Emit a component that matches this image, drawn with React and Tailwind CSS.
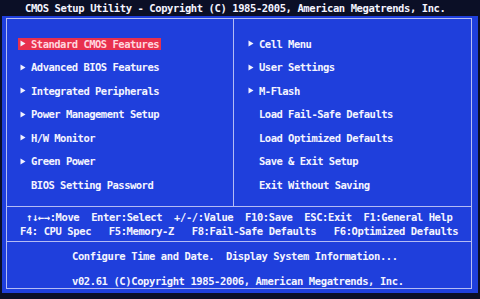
import React from 'react';

const leftItems = [
    { label: 'Standard CMOS Features', arrow: true, active: true },
    { label: 'Advanced BIOS Features', arrow: true },
    { label: 'Integrated Peripherals', arrow: true },
    { label: 'Power Management Setup', arrow: true },
    { label: 'H/W Monitor', arrow: true },
    { label: 'Green Power', arrow: true },
    { label: 'BIOS Setting Password', arrow: false },
];

const rightItems = [
    { label: 'Cell Menu', arrow: true },
    { label: 'User Settings', arrow: true },
    { label: 'M-Flash', arrow: true },
    { label: 'Load Fail-Safe Defaults', arrow: false },
    { label: 'Load Optimized Defaults', arrow: false },
    { label: 'Save & Exit Setup', arrow: false },
    { label: 'Exit Without Saving', arrow: false },
];

function Arrow() {
    return (
        <svg width="6" height="7" viewBox="0 0 6 7" className="shrink-0">
            <path d="M0.5 0.5 L5.5 3.5 L0.5 6.5 Z" fill="#f2f2ff" />
        </svg>
    );
}

function MenuItem({ item }) {
    return (
        <div className="h-[23.5px] flex items-center">
            <div
                className={
                    'flex items-center h-[12px] pl-[2px] pr-[2px] ' +
                    (item.active ? 'bg-[#e8304e] text-[#ffd6de]' : 'text-[#f4f4ff]')
                }
            >
                <div className="w-[11px] flex items-center">{item.arrow && <Arrow />}</div>
                <span className="whitespace-pre">{item.label}</span>
            </div>
        </div>
    );
}

export default function App() {
    return (
        <div
            className="w-[480px] h-[299px] bg-[#0b0f26] flex flex-col overflow-hidden text-[10.5px] tracking-[-0.5px] font-bold leading-none"
            style={{ fontFamily: '"DejaVu Sans Mono", "Liberation Mono", monospace' }}
        >
            <header className="h-[16px] shrink-0 flex items-center pl-[25px] tracking-[-0.4px] text-[#f4f4ff] whitespace-pre">
                CMOS Setup Utility - Copyright (C) 1985-2005, American Megatrends, Inc.
            </header>

            <main className="h-[277px] mx-[2px] bg-[#1f3fdc] pl-[4px] pr-[6px] pt-[2px] pb-[4px]">
                <div className="h-full border border-[#b4bcf4] flex flex-col">
                    <section className="h-[188px] flex border-b border-[#b4bcf4]">
                        <div className="w-[227px] border-r border-[#b4bcf4] pl-[11px] pt-[13px]">
                            {leftItems.map((it) => (
                                <MenuItem key={it.label} item={it} />
                            ))}
                        </div>
                        <div className="flex-1 pl-[12px] pt-[13px]">
                            {rightItems.map((it) => (
                                <MenuItem key={it.label} item={it} />
                            ))}
                        </div>
                    </section>

                    <section className="h-[35px] flex flex-col justify-center gap-[3px] border-b border-[#b4bcf4] tracking-[-0.4px] text-[#f4f4ff]">
                        <p className="pl-[19px] whitespace-pre">↑↓←→:Move  Enter:Select  +/-/:Value  F10:Save  ESC:Exit  F1:General Help</p>
                        <p className="pl-[13px] whitespace-pre">F4: CPU Spec   F5:Memory-Z   F8:Fail-Safe Defaults   F6:Optimized Defaults</p>
                    </section>

                    <section className="flex-1 flex flex-col pl-[65px] pt-[9px] gap-[14px] tracking-[-0.4px] text-[#f4f4ff]">
                        <p className="whitespace-pre">Configure Time and Date.  Display System Information...</p>
                        <p className="whitespace-pre">v02.61 (C)Copyright 1985-2006, American Megatrends, Inc.</p>
                    </section>
                </div>
            </main>
        </div>
    );
}
